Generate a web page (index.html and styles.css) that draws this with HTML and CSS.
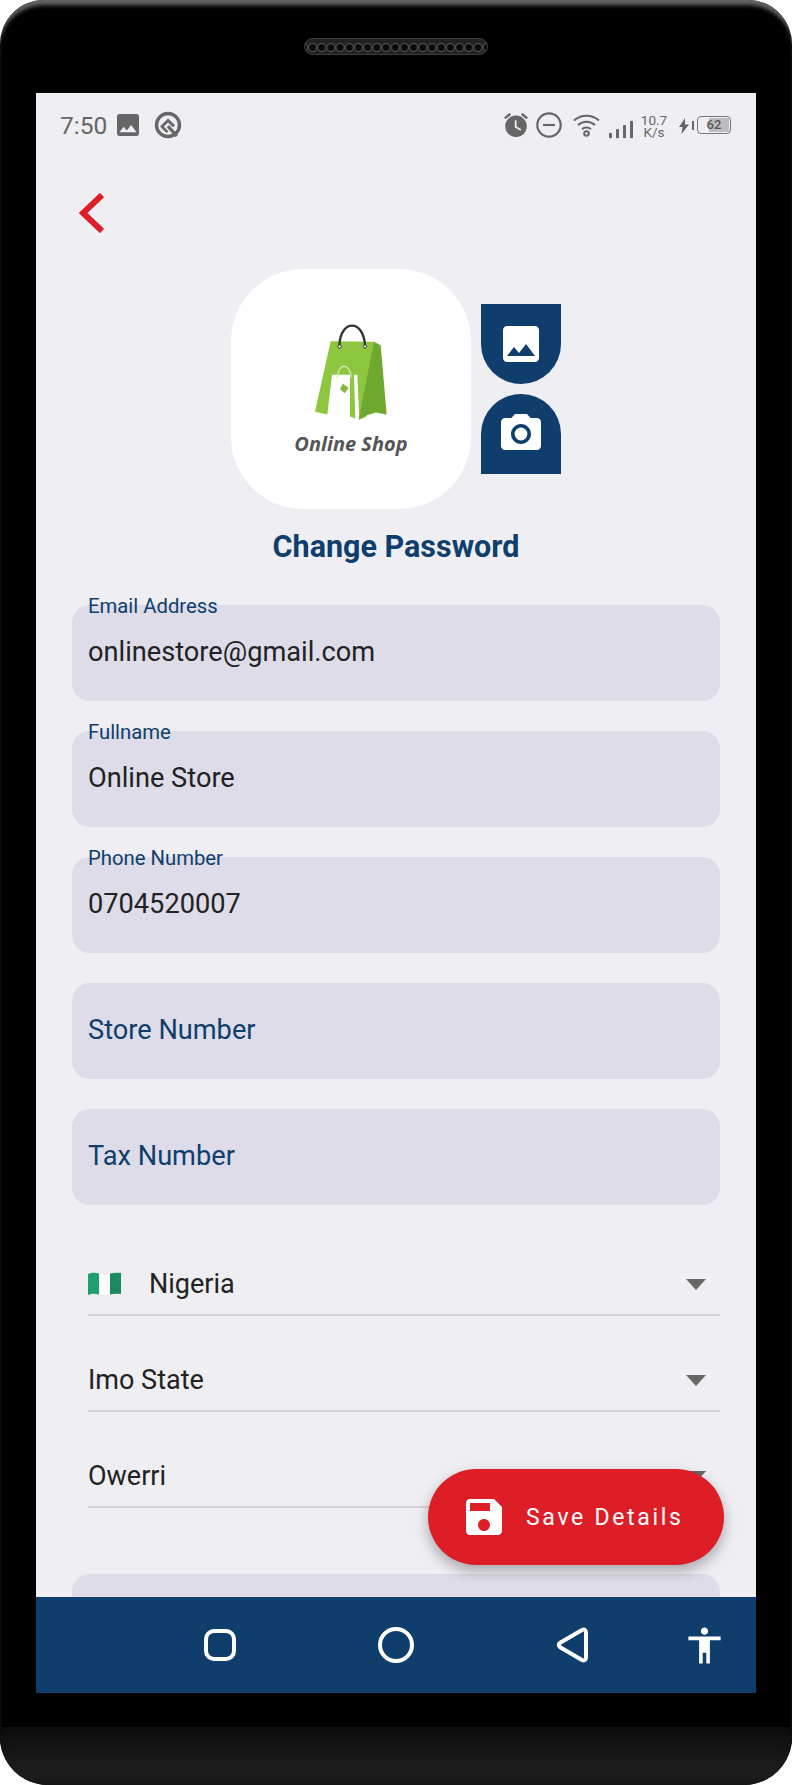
FILE: index.html
```html
<!DOCTYPE html>
<html lang="en">
  <head>
    <meta charset="UTF-8" />
    <meta name="viewport" content="width=device-width, initial-scale=1.0" />
    <title>Change Password</title>
    <link rel="stylesheet" href="styles.css">
  </head>
  <body>
    <div class="phone">
      <div class="bezel-top"><div class="speaker"></div></div>

      <div class="screen">
        <div class="status">
          <span class="time">7:50</span>
          <svg class="ic-image" viewBox="3 3 18 18"><path d="M21 19V5c0-1.1-.9-2-2-2H5c-1.1 0-2 .9-2 2v14c0 1.1.9 2 2 2h14c1.1 0 2-.9 2-2zM8.5 13.5l2.5 3.01L14.5 12l4.5 6H5l3.5-4.5z"/></svg>
          <svg class="ic-q" viewBox="0 0 28 28">
            <circle cx="14" cy="14" r="11.5"/>
            <path d="M14 7.5l7 6.8-2 2-5-4.9-4.2 4.2 4.6 4.6-2 1.8-6.4-6.4z"/>
            <path d="M15 14l9 10-2.4 2.2-8.8-10z"/>
          </svg>
          <div class="status-right">
            <svg class="ic-alarm" viewBox="2 2 20 20">
              <path d="M22 5.72l-4.6-3.86-1.29 1.53 4.6 3.86L22 5.72zM7.88 3.39L6.6 1.86 2 5.71l1.29 1.53 4.59-3.85zM12 4c-4.97 0-9 4.03-9 9s4.02 9 9 9c4.97 0 9-4.03 9-9s-4.03-9-9-9z"/>
              <path class="hands" d="M12.5 8H11v6l4.75 2.85.75-1.23-4-2.37z"/>
            </svg>
            <svg class="ic-dnd" viewBox="0 0 24 24">
              <circle cx="12" cy="12" r="10.8"/>
              <rect x="6.5" y="11" width="11" height="2"/>
            </svg>
            <svg class="ic-wifi" viewBox="0 0 27 24">
              <path d="M1 7.5C8 1 19 1 26 7.5"/>
              <path d="M5 12C10 7.5 17 7.5 22 12"/>
              <path d="M9 16.2C11.5 14 15.5 14 18 16.2"/>
              <circle cx="13.5" cy="20.5" r="2.3"/>
            </svg>
            <svg class="ic-signal" viewBox="0 0 26 19">
              <rect x="0" y="13" width="3.2" height="6" rx="1"/>
              <rect x="7.6" y="9" width="3.2" height="10" rx="1"/>
              <rect x="15.2" y="4.5" width="3.2" height="14.5" rx="1"/>
              <rect x="22.8" y="0" width="3.2" height="19" rx="1"/>
            </svg>
            <div class="speed">10.7<br />K/s</div>
            <svg class="ic-bolt" viewBox="0 0 10 16"><path d="M6 0L0 9h3.5L2.5 16 10 6.5H6z"/></svg>
            <span class="batt-nub"></span>
            <div class="battery"><span class="batt-fill"></span><span class="batt-num">62</span></div>
          </div>
        </div>

        <div class="content">
          <svg class="back" viewBox="0 0 26 40"><polyline points="23,2 4,20 23,38"/></svg>

          <div class="avatar-row">
            <div class="avatar">
              <svg class="bag" viewBox="-27 30 360 320">
                <path class="bag-front" d="M92 96L225 98 200 322 178 332 172 197 96 197 82 316 45 308z"/>
                <path class="bag-front" d="M150 197L162 197 166 328 150 322z"/>
                <path class="bag-side" d="M222 98L242 108 260 316 228 310 200 318 176 332z"/>
                <path class="bag-handle" d="M118 108C122 30 190 30 195 108"/>
                <circle class="bag-eye" cx="119" cy="112" r="5"/>
                <circle class="bag-eye" cx="195" cy="112" r="5"/>
                <path class="tag-handle" d="M112 205C114 160 150 160 154 205"/>
                <path class="tag" d="M128 224L146 236 134 252 120 240z"/>
              </svg>
              <span class="logo-text">Online Shop</span>
            </div>
            <div class="pickers">
              <div class="picker picker-top">
                <svg class="pick-ic" viewBox="0 0 24 24"><path d="M21 19V5c0-1.1-.9-2-2-2H5c-1.1 0-2 .9-2 2v14c0 1.1.9 2 2 2h14c1.1 0 2-.9 2-2zM8.5 13.5l2.5 3.01L14.5 12l4.5 6H5l3.5-4.5z"/></svg>
              </div>
              <div class="picker picker-bottom">
                <svg class="pick-ic" viewBox="0 0 24 24"><circle cx="12" cy="12" r="3.2"/><path d="M9 2L7.17 4H4c-1.1 0-2 .9-2 2v12c0 1.1.9 2 2 2h16c1.1 0 2-.9 2-2V6c0-1.1-.9-2-2-2h-3.17L15 2H9zm3 15c-2.76 0-5-2.24-5-5s2.24-5 5-5 5 2.24 5 5-2.24 5-5 5z"/></svg>
              </div>
            </div>
          </div>

          <h1 class="title">Change Password</h1>

          <div class="fields">
            <div class="field"><label>Email Address</label><span class="value">onlinestore@gmail.com</span></div>
            <div class="field"><label>Fullname</label><span class="value">Online Store</span></div>
            <div class="field"><label>Phone Number</label><span class="value">0704520007</span></div>
            <div class="field"><span class="value placeholder">Store Number</span></div>
            <div class="field"><span class="value placeholder">Tax Number</span></div>
          </div>

          <div class="selects">
            <div class="select">
              <svg class="flag" viewBox="0 0 33 24">
                <path class="flag-white" d="M11 1.5C15 2.5 18 2.5 22 1.5V22.5C18 23.5 15 23.5 11 22.5z"/>
                <path fill="#1f9f70" d="M0 2C4 .5 7 .5 11 1.5V22.5C7 21.5 4 21.5 0 23z"/>
                <path fill="#1b8a60" d="M22 1.5C26 .5 29 .5 33 1V22C29 21.500 26 21.500 22 22.500z"/>
              </svg>
              <span class="select-text">Nigeria</span>
              <span class="caret"></span>
            </div>
            <div class="select"><span class="select-text">Imo State</span><span class="caret"></span></div>
            <div class="select"><span class="select-text">Owerri</span><span class="caret"></span></div>
          </div>

          <div class="field field-cut"></div>
        </div>

        <button class="fab">
          <svg class="fab-ic" viewBox="3 3 18 18"><path d="M17 3H5c-1.11 0-2 .9-2 2v14c0 1.1.89 2 2 2h14c1.1 0 2-.9 2-2V7l-4-4zm-5 16c-1.66 0-3-1.34-3-3s1.34-3 3-3 3 1.34 3 3-1.34 3-3 3zm3-10H5V5h10v4z"/></svg>
          Save Details
        </button>

        <div class="navbar">
          <div class="nav-cell"><svg class="nav-square" viewBox="0 0 32 32"><rect x="2" y="2" width="28" height="28" rx="8"/></svg></div>
          <div class="nav-cell"><svg class="nav-circle" viewBox="0 0 36 36"><circle cx="18" cy="18" r="16"/></svg></div>
          <div class="nav-cell"><svg class="nav-back" viewBox="0 0 32 36"><path d="M4.5 15.5L26 3Q30 1.5 30 6V30Q30 34.5 26 33L4.5 20.5Q1 18 4.5 15.5z"/></svg></div>
          <div class="nav-cell nav-cell-small"><svg class="nav-person" viewBox="0 0 24 24"><path d="M12 2c1.1 0 2 .9 2 2s-.9 2-2 2-2-.9-2-2 .9-2 2-2zm9 7h-6v13h-2v-6h-2v6H9V9H3V7h18v2z"/></svg></div>
        </div>
      </div>

      <div class="bezel-bottom"></div>
    </div>
  </body>
</html>
```

FILE: styles.css
```css
* {
  box-sizing: border-box;
}
html,
body {
  margin: 0;
  background: #fff;
}
body {
  font-family: Roboto, "Liberation Sans", sans-serif;
}
.phone {
  width: 792px;
  height: 1785px;
  background: #000;
  border-radius: 44px 44px 48px 48px;
  overflow: hidden;
  display: flex;
  flex-direction: column;
  box-shadow: inset 0 7px 4px -2px #666;
}
.bezel-top {
  height: 93px;
  padding-top: 38px;
  display: flex;
  justify-content: center;
}
.speaker {
  width: 184px;
  height: 17px;
  border-radius: 9px;
  background-color: #333;
  background-image: radial-gradient(circle at center, #0a0a0a 0 3px, #555 4px, #222 5px);
  background-size: 9.2px 17px;
  background-position: 3px 0;
  border: 1px solid #3c3c3c;
}
.screen {
  position: relative;
  width: 720px;
  height: 1600px;
  margin: 0 36px;
  background: #eeeef3;
  overflow: hidden;
  display: flex;
  flex-direction: column;
}

/* status bar */
.status {
  height: 64px;
  flex: none;
  display: flex;
  align-items: center;
  padding: 0 25px 0 24px;
  color: #666;
}
.status svg {
  fill: #666;
  flex: none;
}
.time {
  font-size: 24.5px;
  width: 47px;
}
.ic-image {
  width: 22px;
  height: 22px;
  margin-left: 10px;
}
.ic-q {
  width: 28px;
  height: 28px;
  margin-left: 15px;
}
.ic-q circle {
  fill: none;
  stroke: #666;
  stroke-width: 3.4;
}
.status-right {
  margin-left: auto;
  display: flex;
  align-items: center;
}
.ic-alarm {
  width: 24px;
  height: 24px;
  margin-right: -1px;
}
.hands {
  fill: #eeeef3;
}
.ic-dnd {
  width: 26px;
  height: 26px;
  margin-left: 9px;
}
.ic-dnd circle {
  fill: none;
  stroke: #666;
  stroke-width: 2;
}
.ic-wifi {
  width: 27px;
  height: 24px;
  margin-left: 11px;
  fill: none;
}
.status .ic-wifi path,
.status .ic-wifi circle {
  fill: none;
  stroke: #666;
  stroke-width: 2;
}
.ic-signal {
  width: 24px;
  height: 19px;
  margin-left: 9px;
  margin-top: 8px;
}
.speed {
  width: 28px;
  margin-left: 7px;
  font-size: 13.5px;
  line-height: 12px;
  text-align: center;
  margin-top: 2px;
}
.ic-bolt {
  width: 10px;
  height: 16px;
  margin-left: 11px;
  margin-top: 2px;
}
.batt-nub {
  width: 2px;
  height: 9px;
  background: #666;
  margin-left: 3px;
}
.battery {
  position: relative;
  width: 34px;
  height: 18px;
  margin-left: 3px;
  border: 1.5px solid #777;
  border-radius: 4px;
  display: flex;
  justify-content: flex-end;
}
.batt-fill {
  width: 62%;
  margin: 1px;
  border-radius: 1px;
  background: #bdbdc0;
}
.batt-num {
  position: absolute;
  inset: 0;
  text-align: center;
  font-size: 13px;
  line-height: 15px;
  font-weight: 500;
  color: #555;
}

/* page */
.content {
  flex: 1;
  min-height: 0;
  overflow: hidden;
  padding: 36px 36px 0;
}
.back {
  display: block;
  width: 26px;
  height: 40px;
  margin-left: 7px;
  fill: none;
  stroke: #dd1e26;
  stroke-width: 6;
}
.avatar-row {
  display: flex;
  justify-content: center;
  align-items: center;
  gap: 10px;
  margin-top: 36px;
}
.avatar {
  width: 240px;
  height: 240px;
  padding-bottom: 4px;
  background: #fff;
  border-radius: 72px;
  display: flex;
  flex-direction: column;
  align-items: center;
  justify-content: center;
}
.bag {
  width: 120px;
  height: 107px;
}
.bag-front {
  fill: #8dc63f;
}
.bag-side {
  fill: #6fa82f;
}
.bag-handle {
  fill: none;
  stroke: #333;
  stroke-width: 7;
}
.bag-eye {
  fill: #fff;
  stroke: #333;
  stroke-width: 3;
}
.tag-handle {
  fill: none;
  stroke: #cfe6a8;
  stroke-width: 4;
}
.tag {
  fill: #7fb83a;
}
.logo-text {
  font-family: "Open Sans", sans-serif;
  font-weight: 700;
  font-style: italic;
  font-size: 20px;
  line-height: 24px;
  margin-top: 6px;
  color: #555;
}
.pickers {
  display: flex;
  flex-direction: column;
  gap: 10px;
}
.picker {
  width: 80px;
  height: 80px;
  background: #0f3e6d;
  display: flex;
  align-items: center;
  justify-content: center;
}
.picker-top {
  border-radius: 0 0 40px 40px;
}
.picker-bottom {
  border-radius: 40px 40px 0 0;
}
.pick-ic {
  width: 48px;
  height: 48px;
  fill: #fff;
}
.title {
  margin: 19px 0 0;
  font-size: 30.5px;
  line-height: 38px;
  font-weight: 700;
  text-align: center;
  color: #0f3e6d;
}

/* form */
.fields {
  margin-top: 39px;
  display: flex;
  flex-direction: column;
  gap: 30px;
}
.field {
  position: relative;
  height: 96px;
  background: #dddce8;
  border-radius: 18px;
  display: flex;
  align-items: center;
  padding: 0 16px 2px;
}
.field label {
  position: absolute;
  left: 16px;
  top: -11px;
  font-size: 20.3px;
  line-height: 24px;
  color: #0f3e6d;
}
.value {
  font-size: 27.2px;
  color: #222;
}
.value.placeholder {
  color: #0f3e6d;
}
.selects {
  margin-top: 15px;
  padding-left: 16px;
}
.select {
  height: 96px;
  border-bottom: 2px solid #d4d4d8;
  display: flex;
  align-items: flex-end;
  padding-bottom: 12px;
}
.select-text {
  font-size: 27px;
  line-height: 36px;
  color: #222;
}
.flag {
  width: 33px;
  height: 24px;
  margin: 0 28px 6px 0;
}
.flag-white {
  fill: #fdfdfd;
  stroke: #e2e2e6;
  stroke-width: 0.5;
}
.caret {
  margin: 0 14px 12px auto;
  border-left: 10px solid transparent;
  border-right: 10px solid transparent;
  border-top: 11px solid #666;
}
.field-cut {
  margin-top: 66px;
}

/* floating button and nav */
.fab {
  position: absolute;
  right: 32px;
  bottom: 128px;
  width: 296px;
  height: 96px;
  border: none;
  border-radius: 48px;
  background: #dd1e26;
  color: #fff;
  font-family: Roboto, sans-serif;
  font-size: 23px;
  letter-spacing: 2.7px;
  display: flex;
  align-items: center;
  gap: 24px;
  padding: 0 0 0 38px;
  box-shadow: 0 6px 14px rgba(0, 0, 0, 0.3);
}
.fab-ic {
  width: 36px;
  height: 36px;
  fill: #fff;
}
.navbar {
  height: 96px;
  flex: none;
  background: #0f3e6d;
  display: flex;
  padding-left: 96px;
}
.nav-cell {
  width: 176px;
  display: flex;
  align-items: center;
  justify-content: center;
}
.nav-cell-small {
  width: 88px;
}
.navbar svg {
  fill: none;
  stroke: #fff;
  stroke-width: 4;
}
.nav-square {
  width: 32px;
  height: 32px;
}
.nav-circle {
  width: 36px;
  height: 36px;
}
.nav-back {
  width: 32px;
  height: 36px;
  stroke-linejoin: round;
}
.navbar .nav-person {
  width: 43px;
  height: 43px;
  fill: #fff;
  stroke: none;
}
.bezel-bottom {
  height: 58px;
  margin-top: 34px;
  background: linear-gradient(#0d0d0d, #232323);
  box-shadow: inset 0 -6px 18px -8px #000;
}
```
